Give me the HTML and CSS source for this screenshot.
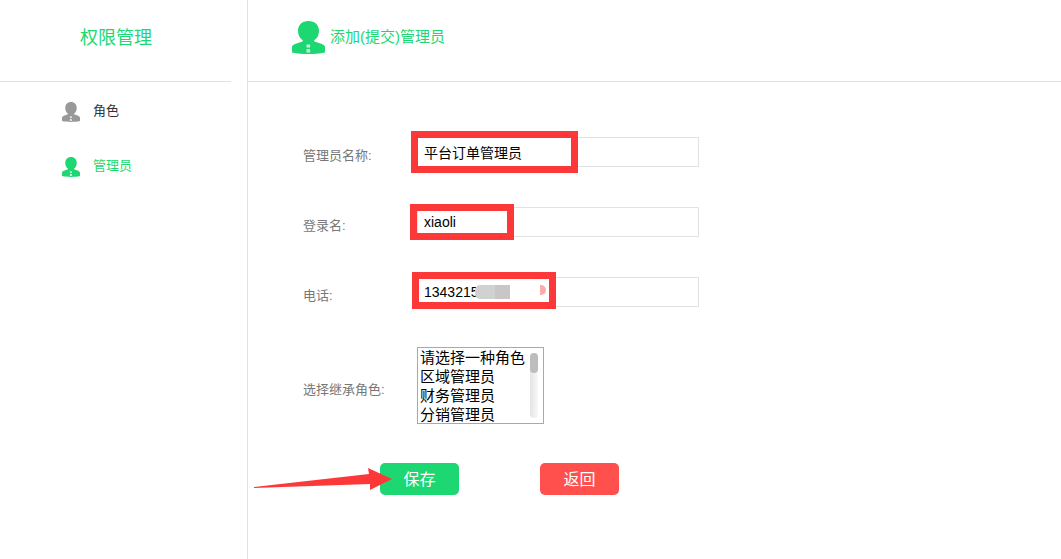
FILE: index.html
```html
<!DOCTYPE html>
<html lang="zh-CN">
<head>
<meta charset="utf-8">
<title>权限管理</title>
<link rel="stylesheet" href="styles.css">
</head>
<body>
<svg width="0" height="0" class="defs" aria-hidden="true">
  <symbol id="user" viewBox="0 0 33 33" preserveAspectRatio="none">
    <path fill="currentColor" d="M16.500 0C23 0 27 4 27 10C27 14.500 25 17.500 22 19.500C22 20.500 23.500 21 27 22C31.500 23.200 33 24.500 33 26.500V31.500C28 32.700 22 33 16.500 33S5 32.700 0 31.500V26.500C0 24.500 1.500 23.200 6 22C9.500 21 11 20.500 11 19.500C8 17.500 6 14.500 6 10C6 4 10 0 16.500 0Z"/>
    <path fill="#fff" opacity=".75" d="M14.500 23.500h3.600v3h-3.600zM14.500 28h3.600v3.500h-3.600z"/>
  </symbol>
</svg>
<div class="layout">
  <aside class="sidebar">
    <h1 class="sidebar-title">权限管理</h1>
    <nav class="menu">
      <a class="menu-item" href="#"><svg class="menu-icon"><use href="#user"/></svg><span>角色</span></a>
      <a class="menu-item active" href="#"><svg class="menu-icon"><use href="#user"/></svg><span>管理员</span></a>
    </nav>
  </aside>
  <main class="main">
    <header class="page-head">
      <svg class="head-icon"><use href="#user"/></svg>
      <h2 class="head-title">添加(提交)管理员</h2>
    </header>
    <form class="form">
      <div class="row">
        <label class="label" for="name">管理员名称:</label>
        <div class="field">
          <input class="input" id="name" type="text" value="平台订单管理员">
          <span class="mark mark-name"></span>
        </div>
      </div>
      <div class="row">
        <label class="label" for="login">登录名:</label>
        <div class="field">
          <input class="input" id="login" type="text" value="xiaoli">
          <span class="mark mark-login"></span>
        </div>
      </div>
      <div class="row">
        <label class="label" for="phone">电话:</label>
        <div class="field">
          <input class="input" id="phone" type="text" value="1343215">
          <span class="mask"></span>
          <span class="dot"></span>
          <span class="mark mark-phone"></span>
        </div>
      </div>
      <div class="row row-select">
        <label class="label" for="role">选择继承角色:</label>
        <div class="list">
          <select class="select" id="role" size="4">
            <option>请选择一种角色</option>
            <option>区域管理员</option>
            <option>财务管理员</option>
            <option>分销管理员</option>
          </select>
          <span class="track"><span class="thumb"></span></span>
        </div>
      </div>
      <div class="actions">
        <button class="btn save" type="button">保存</button>
        <button class="btn back" type="button">返回</button>
        <svg class="arrow" viewBox="0 0 138 23" aria-hidden="true"><path fill="#fc3838" d="M0 19L115 6L114 0L138 11L116 22V16L0 20Z"/></svg>
      </div>
    </form>
  </main>
</div>
</body>
</html>
```
FILE: styles.css
```css
* { box-sizing: border-box; }
body {
  margin: 0;
  background: #fff;
  color: #333;
  font-family: "Liberation Sans", "Noto Sans CJK SC", sans-serif;
  font-size: 13px;
}
.defs { position: absolute; }
.layout { display: flex; min-height: 100vh; }
.sidebar {
  flex: 0 0 248px;
  padding-right: 16px;
  border-right: 1px solid #e2e2e2;
}
.sidebar-title {
  margin: 0;
  height: 82px;
  padding: 24px 0 0 80px;
  border-bottom: 1px solid #e2e2e2;
  color: #1dd772;
  font-size: 18px;
  font-weight: 400;
  line-height: 28px;
}
.menu {
  display: flex;
  flex-direction: column;
  gap: 35px;
  padding: 19px 0 0 62px;
}
.menu-item {
  display: flex;
  gap: 13px;
  height: 20px;
  color: #333;
  line-height: 20px;
  text-decoration: none;
}
.menu-icon { width: 18px; height: 20px; margin-top: 1px; color: #999; }
.menu-item.active, .active .menu-icon { color: #1dd772; }
.main { flex: 1; min-width: 0; }
.page-head {
  display: flex;
  gap: 5px;
  height: 82px;
  padding: 21px 0 0 44px;
  border-bottom: 1px solid #e2e2e2;
  color: #1dd772;
}
.head-icon { width: 33px; height: 33px; }
.head-title { margin: 0; font-size: 15px; font-weight: 400; line-height: 32px; }
.form { padding: 55px 20px 40px 55px; }
.row { display: flex; margin-bottom: 40px; }
.label { width: 114px; padding-top: 9px; color: #777; line-height: 20px; }
.field { position: relative; flex: 0 1 282px; }
.input {
  display: block;
  width: 100%;
  height: 30px;
  padding: 0 6px 1px;
  border: 1px solid #e2e2e2;
  background: #fff;
  color: #000;
  font: 14px "Liberation Sans", "Noto Sans CJK SC", sans-serif;
  outline: none;
}
.mark { position: absolute; border: 7px solid #fc3838; pointer-events: none; }
.mark-name { left: -6px; top: -6px; width: 167px; height: 42px; }
.mark-login { left: -7px; top: -3px; width: 104px; height: 36px; }
.mark-phone { left: -5px; top: -5px; width: 144px; height: 37px; }
.mask {
  position: absolute;
  left: 58px;
  top: 8px;
  width: 35px;
  height: 14px;
  border-radius: 5px 0 0 5px;
  background: linear-gradient(90deg, #cfd2d0 57%, #c8c6c6 57%);
}
.dot {
  position: absolute;
  left: 123px;
  top: 8px;
  width: 6px;
  height: 10px;
  border-radius: 0 5px 5px 0;
  background: #ffabab;
}
.row-select { align-items: center; margin-bottom: 39px; }
.list { position: relative; }
.select {
  display: block;
  width: 127px;
  height: 77px;
  padding: 0;
  border: 1px solid #a9a9a9;
  border-radius: 0;
  background: #fff;
  color: #000;
  font: 15px "Liberation Sans", "Noto Sans CJK SC", sans-serif;
  overflow: hidden;
  outline: none;
}
.select option {
  display: flex;
  align-items: center;
  height: 19px;
  min-height: 0;
  padding: 0 2px 3px;
}
.track {
  position: absolute;
  right: 6px;
  top: 6px;
  width: 8px;
  height: 65px;
  border-radius: 4px;
  background: linear-gradient(90deg, #e4e4e4, #f8f8f8);
}
.thumb { display: block; height: 20px; border-radius: 4px; background: #bdbdbd; }
.actions { position: relative; display: flex; gap: 81px; padding-left: 77px; }
.btn {
  width: 79px;
  height: 32px;
  padding: 0 0 2px;
  border: 0;
  border-radius: 5px;
  color: #fff;
  font: 16px "Liberation Sans", "Noto Sans CJK SC", sans-serif;
}
.save { background: #1dd772; }
.back { background: #ff504d; }
.arrow { position: absolute; left: -49px; top: 5px; width: 138px; height: 23px; }
```
